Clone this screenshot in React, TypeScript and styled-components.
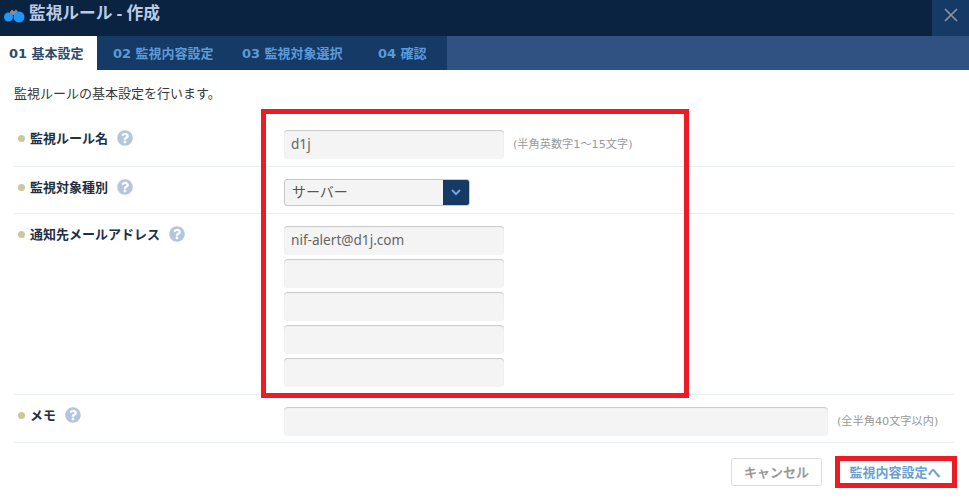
import styled, { createGlobalStyle } from 'styled-components'
import { FaQuestionCircle } from 'react-icons/fa'

const GlobalStyle = createGlobalStyle`
  html, body {
    margin: 0;
    background: #fff;
  }
  * {
    box-sizing: border-box;
  }
`

const Page = styled.div`
  position: relative;
  width: 969px;
  height: 500px;
  overflow: hidden;
  font-family: 'Open Sans', 'Noto Sans CJK JP', sans-serif;
  font-size: 13px;
  color: #3a3a3a;
`

const Header = styled.header`
  display: flex;
  justify-content: space-between;
  height: 36px;
  background: #0a2340;
`

const Title = styled.h1`
  display: flex;
  align-items: center;
  gap: 4px;
  margin: 0 0 12px 4px;
  font-size: 16.7px;
  font-weight: 700;
  color: #b9cbe6;
`

const LogoMark = styled.svg`
  margin-top: 6px;
`

const CloseButton = styled.button`
  display: flex;
  align-items: center;
  justify-content: center;
  width: 37px;
  border: 0;
  padding: 0 0 7px;
  background: #153a66;
`

const TabBar = styled.nav`
  display: flex;
  height: 34px;
  background: #305283;
`

const TabList = styled.div`
  display: flex;
  width: 447px;
  background: #153a66;
`

const Tab = styled.div<{ $active?: boolean; $width: number; $inset: number }>`
  display: flex;
  align-items: center;
  width: ${p => p.$width}px;
  padding: 0 0 2px ${p => p.$inset}px;
  font-family: 'DejaVu Sans', 'Noto Sans CJK JP', sans-serif;
  font-size: 13px;
  font-weight: 700;
  white-space: nowrap;
  background: ${p => (p.$active ? '#fff' : 'transparent')};
  color: ${p => (p.$active ? '#2e4a6e' : '#5b9bd8')};
`

const Content = styled.main`
  padding: 14px 15px 0 14px;
`

const Lead = styled.p`
  margin: 0;
  height: 33px;
  line-height: 18px;
  font-size: 13px;
`

const Row = styled.div<{ $top: number; $bottom?: number }>`
  display: flex;
  padding: ${p => p.$top}px 0 ${p => p.$bottom ?? 7}px;
  border-bottom: 1px solid #e9eef3;
`

const LabelCell = styled.div`
  display: flex;
  align-items: flex-start;
  width: 270px;
  flex: none;
  padding: 0 0 0 4px;
  margin-top: -1px;
  line-height: 18px;
`

const Bullet = styled.span`
  width: 7px;
  height: 7px;
  margin: 6px 5px 0 0;
  border-radius: 50%;
  background: #cdc79e;
`

const LabelText = styled.span`
  font-size: 13px;
  font-weight: 700;
  color: #1f3044;
`

const Help = styled.span`
  display: flex;
  margin: 1px 0 0 9px;
  font-size: 16px;
  color: #b3c6dd;
`

const FieldLine = styled.div`
  display: flex;
  align-items: center;
`

const FieldStack = styled.div`
  display: flex;
  flex-direction: column;
  gap: 4px;
`

const TextInput = styled.input<{ $width: number }>`
  display: block;
  width: ${p => p.$width}px;
  height: 29px;
  padding: 0 7px 3px;
  border: 0;
  border-radius: 4px;
  background: #f4f4f4;
  box-shadow: inset 0 1px 1px #c8c8c8;
  font-family: 'Noto Sans', 'Noto Sans CJK JP', sans-serif;
  font-size: 13.6px;
  color: #666;
  outline: none;
`

const Hint = styled.span`
  margin: -3px 0 0 9px;
  font-family: 'DejaVu Sans', 'Noto Sans CJK JP', sans-serif;
  font-size: 11.2px;
  color: #999;
`

const Select = styled.div`
  display: flex;
  width: 186px;
  height: 27px;
  border: 1px solid #c8c8c8;
  border-radius: 3px;
  background: #f4f4f4;
  overflow: hidden;
`

const SelectValue = styled.span`
  flex: 1;
  padding-left: 7px;
  line-height: 24px;
  font-size: 14px;
  color: #555;
`

const SelectArrow = styled.span`
  display: flex;
  align-items: center;
  justify-content: center;
  width: 26px;
  background: #153a66;
`

const Footer = styled.footer`
  display: flex;
  justify-content: flex-end;
  gap: 14px;
  padding-top: 15px;
`

const Button = styled.button<{ $primary?: boolean }>`
  width: ${p => (p.$primary ? '118px' : '91px')};
  height: 28px;
  padding: 0 0 2px;
  border: ${p => (p.$primary ? '0' : '1px solid #ddd')};
  border-radius: 3px;
  background: #fff;
  font-family: inherit;
  font-size: 13px;
  font-weight: 700;
  color: ${p => (p.$primary ? '#6c9fd0' : '#9a9a9a')};
`

const Callout = styled.div<{ $x: number; $y: number; $w: number; $h: number }>`
  position: absolute;
  left: ${p => p.$x}px;
  top: ${p => p.$y}px;
  width: ${p => p.$w}px;
  height: ${p => p.$h}px;
  border: 5px solid #ed1c24;
  pointer-events: none;
`

function Logo() {
  return (
    <LogoMark width="21" height="16" viewBox="0 0 21 16">
      <path d="M6 5 L8 2.5 L10 4.5 L12 2.5 L14 5 L14 8 L6 8 Z" fill="#8a8f96" />
      <circle cx="4.5" cy="10" r="4.5" fill="#2196f3" />
      <circle cx="15" cy="10" r="5.5" fill="#2196f3" />
    </LogoMark>
  )
}

function Field({ label }: { label: string }) {
  return (
    <LabelCell>
      <Bullet />
      <LabelText>{label}</LabelText>
      <Help>
        <FaQuestionCircle />
      </Help>
    </LabelCell>
  )
}

const tabs = [
  { label: '01 基本設定', width: 97, inset: 9, active: true },
  { label: '02 監視内容設定', width: 130, inset: 16 },
  { label: '03 監視対象選択', width: 130, inset: 15 },
  { label: '04 確認', width: 90, inset: 21 },
]

const mails = ['nif-alert@d1j.com', '', '', '', '']

export default function App() {
  return (
    <Page>
      <GlobalStyle />
      <Header>
        <Title>
          <Logo />
          監視ルール - 作成
        </Title>
        <CloseButton aria-label="閉じる">
          <svg width="14" height="14" viewBox="0 0 14 14">
            <path d="M1 1 L13 13 M13 1 L1 13" stroke="#8f959c" strokeWidth="1.6" />
          </svg>
        </CloseButton>
      </Header>
      <TabBar>
        <TabList>
          {tabs.map(t => (
            <Tab key={t.label} $active={t.active} $width={t.width} $inset={t.inset}>
              {t.label}
            </Tab>
          ))}
        </TabList>
      </TabBar>
      <Content>
        <Lead>監視ルールの基本設定を行います。</Lead>
        <Row $top={13}>
          <Field label="監視ルール名" />
          <FieldLine>
            <TextInput $width={220} defaultValue="d1j" />
            <Hint>(半角英数字1～15文字)</Hint>
          </FieldLine>
        </Row>
        <Row $top={12}>
          <Field label="監視対象種別" />
          <Select>
            <SelectValue>サーバー</SelectValue>
            <SelectArrow>
              <svg width="10" height="7" viewBox="0 0 10 7">
                <path d="M1 1 L5 5 L9 1" fill="none" stroke="#6ea6dc" strokeWidth="2" />
              </svg>
            </SelectArrow>
          </Select>
        </Row>
        <Row $top={12}>
          <Field label="通知先メールアドレス" />
          <FieldStack>
            {mails.map((m, i) => (
              <TextInput key={i} $width={220} defaultValue={m} />
            ))}
          </FieldStack>
        </Row>
        <Row $top={12} $bottom={6}>
          <Field label="メモ" />
          <FieldLine>
            <TextInput $width={544} />
            <Hint>(全半角40文字以内)</Hint>
          </FieldLine>
        </Row>
        <Footer>
          <Button>キャンセル</Button>
          <Button $primary>監視内容設定へ</Button>
        </Footer>
      </Content>
      <Callout $x={261} $y={109} $w={428} $h={289} />
      <Callout $x={835} $y={456} $w={122} $h={32} />
    </Page>
  )
}
